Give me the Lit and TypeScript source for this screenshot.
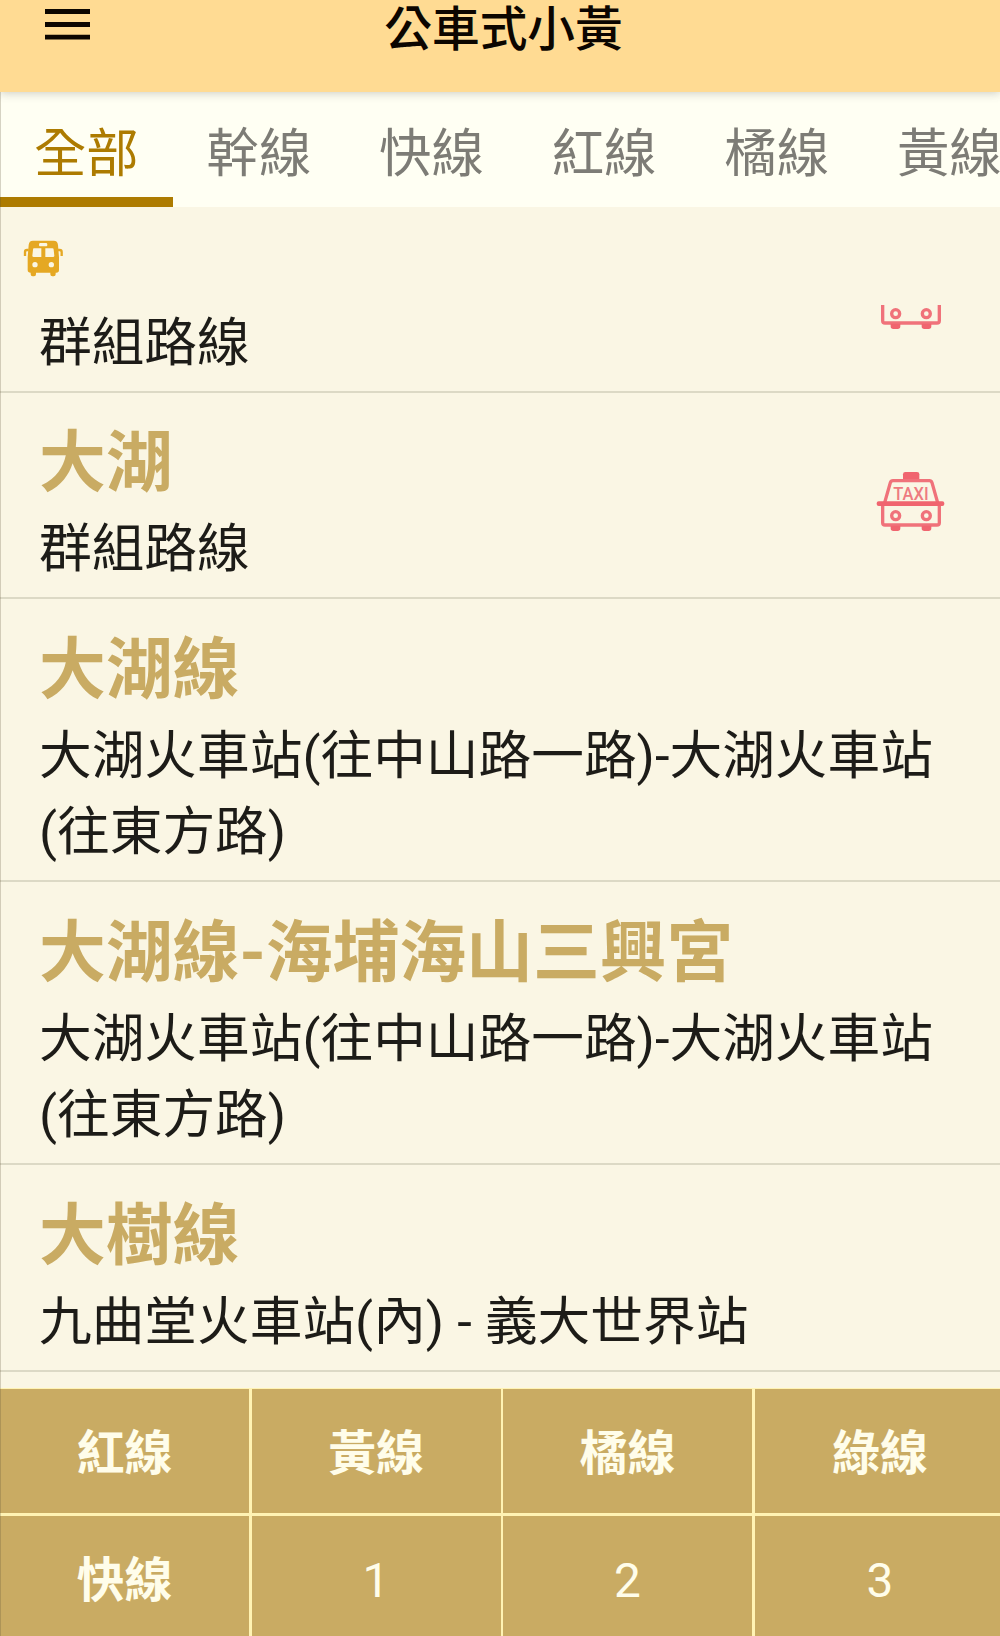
import { LitElement, html, css, svg, nothing } from "lit";
import { customElement, property } from "lit/decorators.js";
import { classMap } from "lit/directives/class-map.js";

interface Route {
  name: string;
  detail: string;
  taxi?: boolean;
  low?: boolean;
}

const TABS = ["全部", "幹線", "快線", "紅線", "橘線", "黃線"];

const ROUTES: Route[] = [
  { name: "", detail: "群組路線", taxi: true, low: true },
  { name: "大湖", detail: "群組路線", taxi: true },
  { name: "大湖線", detail: "大湖火車站(往中山路一路)-大湖火車站(往東方路)" },
  { name: "大湖線-海埔海山三興宮", detail: "大湖火車站(往中山路一路)-大湖火車站(往東方路)" },
  { name: "大樹線", detail: "九曲堂火車站(內) - 義大世界站" },
];

const KEYS = ["紅線", "黃線", "橘線", "綠線", "快線", "1", "2", "3"];

const taxiIcon = svg`
  <rect x="159" y="64" width="49" height="26" rx="7" fill="#f0656f"/>
  <g fill="none" stroke="#f0727a" stroke-width="10" stroke-linejoin="round">
    <path d="M104 156 L121 96 Q123 90 129 90 H238 Q244 90 246 96 L263 156"/>
    <path d="M98 160 V216 Q98 223 105 223 H261 Q268 223 268 216 V160"/>
    <circle cx="137" cy="195" r="12"/>
    <circle cx="229" cy="195" r="12"/>
  </g>
  <rect x="80" y="152" width="203" height="14" rx="6" fill="#f0656f"/>
  <path d="M122 225 H151 V233 Q151 241 143 241 H130 Q122 241 122 233 Z M215 225 H244 V233 Q244 241 236 241 H223 Q215 241 215 233 Z" fill="#f0656f"/>
  <text x="183" y="147" text-anchor="middle" textLength="106" lengthAdjust="spacingAndGlyphs" class="taxi-text">TAXI</text>`;

@customElement("route-row")
class RouteRow extends LitElement {
  @property({ attribute: false }) route!: Route;

  static styles = css`
    :host {
      display: block;
      flex: none;
      border-bottom: 2px solid #dcd9c5;
    }
    .row {
      display: flex;
      align-items: center;
      padding: 22.2px 40px 9.7px 39px;
    }
    .text {
      flex: 1;
      min-width: 0;
    }
    .name {
      height: 96.5px;
      line-height: 96.5px;
      font-size: 66.8px;
      font-weight: 700;
      color: #c9ab63;
      white-space: nowrap;
    }
    .detail {
      font-size: 52.7px;
      line-height: 76.3px;
      color: #1d1c18;
    }
    .icon {
      flex: none;
      width: 71.67px;
      height: 65px;
      margin-right: 13.5px;
    }
    .icon.low {
      margin-top: 10px;
    }
    .taxi-text {
      font: 500 54px Roboto, sans-serif;
      fill: #ee7b80;
    }
  `;

  render() {
    const { name, detail, taxi, low } = this.route;
    return html`<div class="row">
      <div class="text">
        <div class="name">${name}</div>
        <div class="detail">${detail}</div>
      </div>
      ${taxi
        ? html`<svg class=${classMap({ icon: true, low: !!low })} viewBox="75 55 215 195">${taxiIcon}</svg>`
        : nothing}
    </div>`;
  }
}

@customElement("app-root")
class AppRoot extends LitElement {
  static styles = css`
    :host {
      display: flex;
      flex-direction: column;
      position: relative;
      height: 1636px;
      overflow: hidden;
      background: #faf6e4;
      font-family: Roboto, "Noto Sans CJK TC", sans-serif;
    }
    :host::after {
      content: "";
      position: absolute;
      inset: 0 auto 0 0;
      width: 1px;
      background: rgba(90, 80, 50, 0.25);
    }
    .header {
      flex: none;
      display: grid;
      grid-template-columns: 135px 1fr 128px;
      height: 92px;
      background: #ffdb93;
      box-shadow: 0 1px 9px rgba(80, 80, 80, 0.3);
      z-index: 1;
    }
    .menu {
      width: 45px;
      height: 31px;
      margin: 8.5px 0 0 45px;
    }
    .title {
      text-align: center;
      font-size: 47.7px;
      line-height: 60px;
      font-weight: 500;
      color: #0c0600;
    }
    .tabs {
      flex: none;
      display: flex;
      height: 115px;
      overflow: hidden;
      background: #fffff3;
    }
    .tab {
      flex: none;
      box-sizing: border-box;
      width: 172.6px;
      border-bottom: 10px solid transparent;
      text-align: center;
      font-size: 52.4px;
      line-height: 124px;
      color: #7d7c76;
    }
    .tab.active {
      color: #ad7b00;
      border-color: #ad7b00;
    }
    .marker {
      flex: none;
      height: 98px;
    }
    .bus {
      display: block;
      width: 42px;
      height: 39.33px;
      margin: 31.5px 0 0 22px;
    }
    .list {
      flex: none;
      display: flex;
      flex-direction: column;
      justify-content: flex-end;
      height: 1067px;
      overflow: hidden;
    }
    .keys {
      flex: 1;
      display: grid;
      grid-template-columns: repeat(4, 249px);
      grid-auto-rows: 124px;
      gap: 2.5px;
      margin-top: 16px;
      padding-top: 1px;
      background: #fff3b4;
    }
    .key {
      display: flex;
      align-items: center;
      justify-content: center;
      box-sizing: border-box;
      padding-top: 6px;
      background: #c9ab63;
      color: #fffdea;
      font-size: 47.8px;
      line-height: 60px;
    }
    .key:nth-child(4n) {
      width: 251px;
    }
    .key.bold {
      font-weight: 700;
    }
  `;

  render() {
    return html`
      <div class="header">
        <svg class="menu" viewBox="0 0 45 31">
          <path d="M0 2.5H45M0 15.5H45M0 28.2H45" stroke="#0c0600" stroke-width="4.8" />
        </svg>
        <div class="title">公車式小黃</div>
      </div>
      <div class="tabs">
        ${TABS.map((t, i) => html`<div class=${classMap({ tab: true, active: i === 0 })}>${t}</div>`)}
      </div>
      <div class="marker">
        <svg class="bus" viewBox="65 55 126 118">
          <path
            fill="#e5a823"
            fill-rule="evenodd"
            d="M98 60H160Q172 60 173 73L176 110V148Q176 156 168 156H166V161Q166 167 160 167H156Q150 167 150 161V156H107V161Q107 167 101 167H97Q91 167 91 161V156Q82 156 82 148V110L85 73Q86 60 98 60ZM119 67Q116 67 116 72Q116 77 119 77H138Q141 77 141 72Q141 67 138 67ZM101 83Q98 83 98 87L96 105Q96 109 100 109H123V83ZM135 83V109H158Q162 109 162 105L160 87Q160 83 156 83ZM104 124A8 8 0 1 0 104 140A8 8 0 1 0 104 124ZM153 124A8 8 0 1 0 153 140A8 8 0 1 0 153 124Z"
          />
          <path d="M85 88H80Q74 88 74 94V106M173 88H178Q184 88 184 94V106" fill="none" stroke="#e5a823" stroke-width="7" />
        </svg>
      </div>
      <div class="list">${ROUTES.map((r) => html`<route-row .route=${r}></route-row>`)}</div>
      <div class="keys">
        ${KEYS.map((k) => html`<div class=${classMap({ key: true, bold: k.length > 1 })}>${k}</div>`)}
      </div>
    `;
  }
}
